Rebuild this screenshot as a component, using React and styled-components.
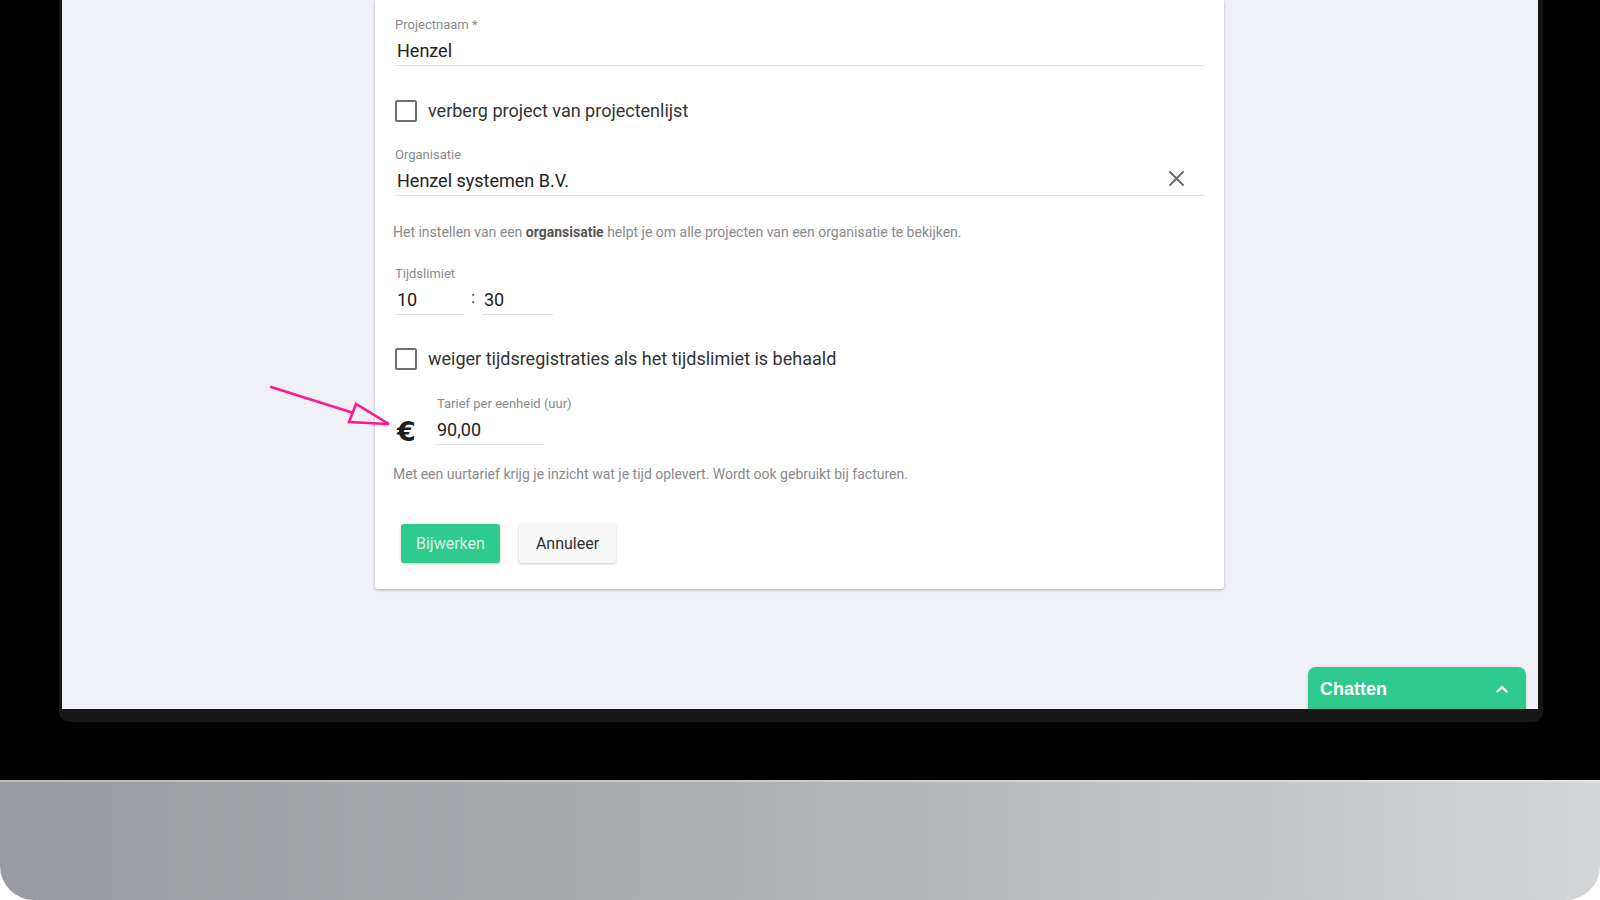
import styled, { createGlobalStyle } from 'styled-components';

const GlobalStyle = createGlobalStyle`
  body {
    margin: 0;
    background: #fff;
    font-family: Roboto, "Liberation Sans", sans-serif;
  }
`;

const Page = styled.div`
  width: 1600px;
  height: 900px;
  overflow: hidden;
  display: flex;
  flex-direction: column;
`;

const Bezel = styled.div`
  height: 780px;
  flex-shrink: 0;
  background: #000;
`;

const ScreenFrame = styled.div`
  margin-left: 59px;
  width: 1476px;
  padding: 0 5px 13px 3px;
  background: #161616;
  border-radius: 0 0 10px 10px;
`;

const Screen = styled.div`
  position: relative;
  height: 709px;
  overflow: hidden;
  background: #f0f1f6;
  display: flex;
  flex-direction: column;
`;

const Base = styled.div`
  flex: 1;
  background: linear-gradient(90deg, #9a9ba0 0%, #aeafb3 45%, #d4d5d7 100%);
  box-shadow: inset 0 2px 0 rgba(255, 255, 255, 0.35);
  border-radius: 0 0 34px 34px;
`;

const Card = styled.div`
  margin-left: 313px;
  width: 849px;
  box-sizing: border-box;
  padding: 17px 20px 26px;
  background: #fff;
  border-radius: 0 0 3px 3px;
  box-shadow: 0 1px 3px rgba(0, 0, 0, 0.28);
  display: flex;
  flex-direction: column;
`;

const Field = styled.div`
  display: flex;
  flex-direction: column;
  width: ${({ width }) => width || 'auto'};
  margin-top: ${({ top }) => top || 0}px;
`;

const Label = styled.div`
  font-size: 13px;
  line-height: 16px;
  color: #8a8a8a;
  white-space: nowrap;
  padding-left: ${({ inset }) => inset || 0}px;
  margin-bottom: 5px;
`;

const InputLine = styled.div`
  display: flex;
  align-items: center;
  height: 24px;
  padding: 0 2px 3px;
  border-bottom: 1px solid #e2e2e2;
  font-size: 18px;
  color: #222;
`;

const InputValue = styled.span`
  flex: 1;
`;

const ClearIcon = styled.svg`
  width: 15px;
  height: 15px;
  margin-right: 18px;
  margin-top: -4px;
`;

const CheckRow = styled.label`
  display: flex;
  align-items: center;
  gap: 11px;
  margin-top: ${({ top }) => top}px;
  font-size: 18px;
  line-height: 22px;
  color: #333;
`;

const Box = styled.span`
  width: 18px;
  height: 18px;
  border: 2px solid #6f6f6f;
  border-radius: 2px;
`;

const Helper = styled.p`
  margin: ${({ top }) => top}px 0 0 -2px;
  font-size: 14px;
  line-height: 16px;
  color: #8a8a8a;

  b {
    color: #555;
    font-weight: 700;
  }
`;

const TimeRow = styled.div`
  display: flex;
  align-items: flex-start;
`;

const Colon = styled.span`
  width: 18px;
  height: 24px;
  line-height: 20px;
  text-align: center;
  font-size: 17px;
  color: #333;
`;

const RateRow = styled.div`
  display: flex;
  align-items: flex-end;
  margin-top: 26px;
`;

const Euro = styled.span`
  width: 38px;
  padding-left: 2px;
  margin-bottom: -3px;
  font-family: "DejaVu Sans", sans-serif;
  font-size: 27px;
  line-height: 32px;
  font-weight: 700;
  color: #1e1e1e;
`;

const Actions = styled.div`
  display: flex;
  gap: 19px;
  margin: 42px 0 0 6px;
`;

const Button = styled.button`
  height: 39px;
  padding: 0 ${({ primary }) => (primary ? 15 : 17)}px;
  border: none;
  border-radius: 3px;
  font-family: Roboto, "Liberation Sans", sans-serif;
  font-size: 16px;
  background: ${({ primary }) => (primary ? '#2fcb8e' : '#f8f8f8')};
  color: ${({ primary }) => (primary ? 'rgba(255,255,255,0.82)' : '#2e2e2e')};
  box-shadow: 0 1px 3px rgba(0, 0, 0, 0.22);
`;

const Pointer = styled.svg`
  position: absolute;
  left: 200px;
  top: 378px;
  width: 135px;
  height: 52px;
`;

const ChatTab = styled.div`
  position: absolute;
  left: 1246px;
  top: 667px;
  width: 218px;
  height: 54px;
  box-sizing: border-box;
  padding: 0 18px 10px 12px;
  display: flex;
  align-items: center;
  justify-content: space-between;
  background: #30c98d;
  border-radius: 8px 8px 0 0;
  box-shadow: 0 0 3px rgba(0, 0, 0, 0.15);
  color: #fff;
  font-family: "Liberation Sans", Arial, sans-serif;
  font-size: 18px;
  font-weight: 700;
`;

function Checkbox({ top, children }) {
  return (
    <CheckRow top={top}>
      <Box />
      {children}
    </CheckRow>
  );
}

export default function App() {
  return (
    <Page>
      <GlobalStyle />
      <Bezel>
        <ScreenFrame>
          <Screen>
            <Card>
              <Field>
                <Label>Projectnaam *</Label>
                <InputLine>
                  <InputValue>Henzel</InputValue>
                </InputLine>
              </Field>

              <Checkbox top={34}>verberg project van projectenlijst</Checkbox>

              <Field top={25}>
                <Label>Organisatie</Label>
                <InputLine>
                  <InputValue>Henzel systemen B.V.</InputValue>
                  <ClearIcon viewBox="0 0 15 15">
                    <path d="M1 1L14 14M14 1L1 14" stroke="#666" strokeWidth="1.8" strokeLinecap="round" />
                  </ClearIcon>
                </InputLine>
              </Field>

              <Helper top={28}>
                Het instellen van een <b>organsisatie</b> helpt je om alle projecten van een organisatie te bekijken.
              </Helper>

              <Field top={26}>
                <Label>Tijdslimiet</Label>
                <TimeRow>
                  <Field width="69px">
                    <InputLine>
                      <InputValue>10</InputValue>
                    </InputLine>
                  </Field>
                  <Colon>:</Colon>
                  <Field width="71px">
                    <InputLine>
                      <InputValue>30</InputValue>
                    </InputLine>
                  </Field>
                </TimeRow>
              </Field>

              <Checkbox top={33}>weiger tijdsregistraties als het tijdslimiet is behaald</Checkbox>

              <RateRow>
                <Euro>€</Euro>
                <Field width="109px">
                  <Label inset={2}>Tarief per eenheid (uur)</Label>
                  <InputLine>
                    <InputValue>90,00</InputValue>
                  </InputLine>
                </Field>
              </RateRow>

              <Helper top={21}>
                Met een uurtarief krijg je inzicht wat je tijd oplevert. Wordt ook gebruikt bij facturen.
              </Helper>

              <Actions>
                <Button primary>Bijwerken</Button>
                <Button>Annuleer</Button>
              </Actions>
            </Card>

            <Pointer viewBox="0 0 135 52">
              <line x1="9" y1="9" x2="90" y2="34.5" stroke="#ff1a8c" strokeWidth="2.6" strokeLinecap="round" />
              <polygon
                points="127,46 87,44 94,26"
                fill="none"
                stroke="#ff1a8c"
                strokeWidth="2.6"
                strokeLinejoin="miter"
              />
            </Pointer>

            <ChatTab>
              Chatten
              <svg width="12" height="8" viewBox="0 0 12 8">
                <path d="M1.5 6.5L6 2L10.5 6.5" fill="none" stroke="#fff" strokeWidth="2.4" strokeLinecap="round" strokeLinejoin="round" />
              </svg>
            </ChatTab>
          </Screen>
        </ScreenFrame>
      </Bezel>
      <Base />
    </Page>
  );
}
